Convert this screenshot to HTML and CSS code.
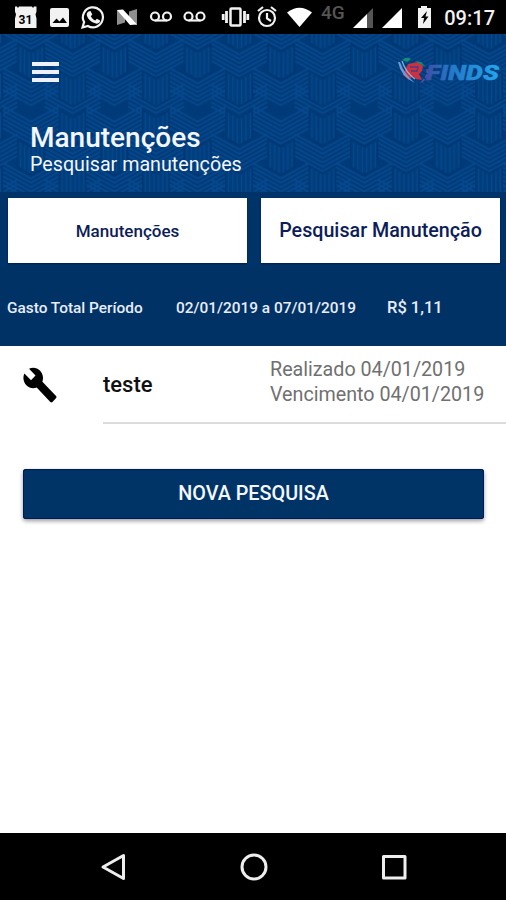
FILE: index.html
```html
<!DOCTYPE html>
<html lang="pt-BR">
<head>
  <meta charset="UTF-8" />
  <meta name="viewport" content="width=device-width, initial-scale=1.0"/>
  <title>Manutenções</title>
  <link rel="stylesheet" href="styles.css">
</head>
<body>
  <div class="status-bar">
    <svg class="status-icons" width="506" height="34" viewBox="0 0 506 34">
      <!-- agenda -->
      <path d="M15 6.500h2l1 1.500 1-1.500h13l1 1.500 1-1.500h2.500v5l-1 3 1 4v9.500H15v-9.500l1-4-1-3z" fill="#f2f2f2"/>
      <text x="25.500" y="23.500" class="cal-day">31</text>
      <!-- imagem -->
      <rect x="50" y="8" width="19" height="19" rx="2" fill="#f2f2f2"/>
      <path d="M52.500 23l4-4.500 3 3 3.500-4 4 5.500z" fill="#000"/>
      <!-- whatsapp -->
      <path d="M82.500 27.500l1.600-5.400a10 10 0 1 1 3.800 3.900z" fill="none" stroke="#f2f2f2" stroke-width="2.200"/>
      <path d="M88.500 11.500l2-.5 1.800 3.500-1.500 1.800c1 2 2.400 3.300 4.400 4.200l1.700-1.700 3.200 1.800c0 3-2.800 3.500-5 2.700-4.500-1.500-7-4-8.200-7.500-.5-1.800.3-3.500 1.600-4.300z" fill="#f2f2f2"/>
      <!-- n -->
      <path d="M117 10v15l8-2.500V13zM129 11.500l8-2.500v16l-8-2.500z" fill="#8f8f8f"/>
      <path d="M117 10l6-.5 14 15-7 .5z" fill="#fff"/>
      <!-- correio de voz -->
      <g fill="none" stroke="#f2f2f2" stroke-width="2.200">
        <circle cx="155" cy="16.500" r="4"/><circle cx="167" cy="16.500" r="4"/><path d="M155 20.500h12"/>
        <circle cx="188.500" cy="16.500" r="4"/><circle cx="200.500" cy="16.500" r="4"/><path d="M188.500 20.500h12"/>
      </g>
      <!-- vibrar -->
      <rect x="230.500" y="8.500" width="10" height="17" rx="1" fill="none" stroke="#f2f2f2" stroke-width="2.500"/>
      <path d="M226.500 11v12M244.500 11v12M223.200 14v6M247.800 14v6" stroke="#f2f2f2" stroke-width="2.800"/>
      <!-- alarme -->
      <g fill="none" stroke="#f2f2f2" stroke-width="2.200">
        <circle cx="267" cy="18" r="8"/><path d="M267 13v5.500l4 2.500M258 11l5-4M276 11l-5-4"/>
      </g>
      <!-- wifi -->
      <path d="M287 12.500q12.500-9.500 25 0L299.500 27z" fill="#fff"/>
      <text x="321" y="19" class="net">4G</text>
      <!-- sinal -->
      <path d="M353 28L367 14v14z" fill="#fff"/><path d="M367 14l6-6v20h-6z" fill="#555"/>
      <path d="M382 28L402 8v20z" fill="#fff"/>
      <!-- bateria -->
      <path d="M418 8h3V6h6v2h4v20h-13z" fill="#f2f2f2"/>
      <path d="M427 11l-6 7h3l-1 6 5.500-7.500h-3z" fill="#000"/>
    </svg>
    <span class="clock">09:17</span>
  </div>

  <header class="header">
    <svg class="header-pattern" width="506" height="158">
      <defs>
        <g id="chevron" fill="none" stroke="#06498f" stroke-width="5">
          <path d="M-84-46L0 0L84-46M-84-33L0 13L84-33M-84-20L0 26L84-20M-84-7L0 39L84-7M-84 6L0 52L84 6M-84 19L0 65L84 19"/>
        </g>
        <g id="bar">
          <path d="M-40-23L0 0L40-23V62L0 85L-40 62z" fill="#003d7c" stroke="#003673" stroke-width="4"/>
          <path d="M-32-14V62M-19-6V69M-6 2V77M7 2V77M20-6V69M33-14V62" stroke="#05478c" stroke-width="4"/>
        </g>
        <g id="weave">
          <use href="#chevron" x="93" y="30"/>
          <use href="#chevron" x="93" y="145"/>
          <use href="#chevron" x="218" y="228"/>
          <use href="#chevron" x="218" y="80"/>
          <use href="#bar" x="93" y="220"/>
          <use href="#bar" x="218" y="15"/>
          <use href="#bar" x="218" y="132"/>
        </g>
        <pattern id="mesh" width="250" height="285" patternUnits="userSpaceOnUse" patternTransform="translate(0 39.500) scale(.3333)">
          <rect width="250" height="285" fill="#003a78"/>
          <use href="#weave" x="-250" y="-285"/>
          <use href="#weave" y="-285"/>
          <use href="#weave" x="-250"/>
          <use href="#weave"/>
          <use href="#weave" y="285"/>
        </pattern>
      </defs>
      <rect width="506" height="158" fill="url(#mesh)"/>
    </svg>
    <div class="header-content">
      <div class="toolbar">
        <button class="menu" aria-label="Menu"><span></span><span></span><span></span></button>
        <svg class="logo" width="106" height="32" viewBox="0 0 106 32">
          <defs>
            <linearGradient id="logo-blue" x1="0" x2="1">
              <stop offset="0" stop-color="#3d4fa5"/>
              <stop offset=".35" stop-color="#2479c8"/>
              <stop offset="1" stop-color="#25a5ec"/>
            </linearGradient>
          </defs>
          <path d="M12 8l10-2 5 4-1 5-3 3 3 6-6-1-3-3-4 4-6-5z" fill="#cf3040"/>
          <path d="M14 11h8l-1 4h-6" fill="none" stroke="#4a3f80" stroke-width="1.500"/>
          <path d="M2 6q3 15 17 21Q8 18 4 6z" fill="#6f9bd6"/>
          <path d="M6 5q4 12 13 18" fill="none" stroke="#8cb3df" stroke-width="1.200"/>
          <path d="M6 4q5-4 9-1l-4 3zM19 5l6 1 5 5-6-3z" fill="#148f74"/>
          <path d="M31 13q2 8-7 14" fill="none" stroke="#5b4aa3" stroke-width="1.800" stroke-dasharray="4 1.500"/>
          <text x="30" y="23.500" class="logo-text" textLength="73" lengthAdjust="spacingAndGlyphs" fill="url(#logo-blue)" stroke="url(#logo-blue)">FINDS</text>
        </svg>
      </div>
      <h1>Manutenções</h1>
      <p class="subtitle">Pesquisar manutenções</p>
    </div>
  </header>

  <nav class="tabs">
    <button class="tab">Manutenções</button>
    <button class="tab tab-large">Pesquisar Manutenção</button>
  </nav>

  <div class="summary">
    <span class="summary-label">Gasto Total Período</span>
    <span class="summary-period">02/01/2019 a 07/01/2019</span>
    <span class="summary-value">R$ 1,11</span>
  </div>

  <main class="content">
    <div class="item">
      <svg class="wrench" width="36" height="38" viewBox="0 0 24 24" preserveAspectRatio="none">
        <path d="M22.700 19l-9.100-9.100c.9-2.300.4-5-1.500-6.900-2-2-5-2.400-7.400-1.300L9 6 6 9 1.600 4.700C.4 7.100.9 10.100 2.900 12.100c1.900 1.900 4.600 2.400 6.900 1.500l9.100 9.100c.4.4 1 .4 1.400 0l2.300-2.300c.5-.4.5-1.100.1-1.400z"/>
      </svg>
      <div class="item-body">
        <span class="item-name">teste</span>
        <div class="item-dates">
          <div class="done">Realizado 04/01/2019</div>
          <div class="due">Vencimento 04/01/2019</div>
        </div>
      </div>
    </div>
    <button class="new-search">NOVA PESQUISA</button>
  </main>

  <div class="nav-bar">
    <svg width="28" height="30" viewBox="0 0 28 30"><path d="M3 15L23.500 3.500v23z"/></svg>
    <svg width="28" height="30" viewBox="0 0 28 30"><circle cx="14" cy="15" r="12"/></svg>
    <svg width="28" height="30" viewBox="0 0 28 30"><rect x="3.500" y="4.500" width="21.500" height="21.500"/></svg>
  </div>
</body>
</html>
```

FILE: styles.css
```css
* {
  box-sizing: border-box;
}
body {
  margin: 0;
  width: 506px;
  height: 900px;
  display: flex;
  flex-direction: column;
  overflow: hidden;
  background: #fff;
  font-family: Roboto, sans-serif;
  font-weight: 500;
}
button {
  border: none;
  padding: 0;
  font-family: inherit;
  font-weight: 500;
  white-space: nowrap;
}
.status-bar {
  height: 34px;
  display: grid;
  background: #000;
}
.status-icons,
.clock {
  grid-area: 1 / 1;
}
.clock {
  justify-self: end;
  padding: 5px 11px 0 0;
  color: #f2f2f2;
  font-size: 20px;
  line-height: 26px;
}
.cal-day {
  font-size: 12px;
  font-weight: 700;
  text-anchor: middle;
}
.net {
  fill: #555;
  font-size: 19px;
}
.header {
  height: 158px;
  display: grid;
}
.header-pattern,
.header-content {
  grid-area: 1 / 1;
}
.header-content {
  z-index: 1;
  color: #f3f6ff;
}
.toolbar {
  height: 75px;
  padding-left: 32px;
  display: flex;
  align-items: center;
  justify-content: space-between;
}
.menu {
  width: 27px;
  display: flex;
  flex-direction: column;
  gap: 4px;
  background: none;
}
.menu span {
  height: 4px;
  background: #eef1fa;
}
.logo {
  margin-right: 4px;
}
.logo-text {
  font-size: 21px;
  font-weight: 900;
  font-style: italic;
  stroke-width: 0.4px;
}
h1 {
  margin: 13px 0 0 30px;
  font-size: 28px;
  font-weight: 500;
  line-height: 32px;
}
.subtitle {
  margin: -1px 0 0 30px;
  font-size: 19.7px;
  font-weight: 400;
  line-height: 24px;
}
.tabs {
  height: 75px;
  padding: 6px 6px 0 8px;
  display: flex;
  gap: 14px;
  background: #003468;
}
.tab {
  flex: 1;
  height: 65px;
  background: #fff;
  color: #0c1d59;
  font-size: 17px;
  box-shadow: 0 1px 2px #001c50;
}
.tab-large {
  font-size: 19.7px;
}
.summary {
  height: 79px;
  padding: 2px 0 0 7px;
  display: flex;
  align-items: center;
  background: #003265;
  color: #e9edfa;
  font-size: 15.4px;
  white-space: nowrap;
}
.summary-label {
  width: 169px;
}
.summary-period {
  width: 211px;
}
.summary-value {
  font-size: 16.5px;
}
.content {
  flex: 1;
}
.item {
  height: 78px;
  padding-left: 22px;
  display: flex;
  align-items: center;
}
.item-body {
  flex: 1;
  height: 78px;
  margin-left: 45px;
  display: flex;
  align-items: center;
  border-bottom: 2px solid #dcdcdc;
}
.item-name {
  width: 167px;
  color: #111;
  font-size: 22px;
}
.item-dates {
  padding-bottom: 4px;
  color: #707070;
  font-size: 19.7px;
  font-weight: 400;
  line-height: 25px;
  white-space: nowrap;
}
.new-search {
  display: block;
  width: 461px;
  height: 50px;
  margin: 45px 0 0 23px;
  padding-bottom: 1px;
  border-radius: 3px;
  background: #003366;
  color: #f4f7ff;
  font-size: 19.8px;
  box-shadow: inset 0 0 0 1px #00195a, 0 2px 4px rgba(0, 0, 0, 0.4);
}
.nav-bar {
  height: 67px;
  padding: 0 98px 0 100px;
  display: flex;
  align-items: center;
  justify-content: space-between;
  background: #000;
}
.nav-bar svg {
  fill: none;
  stroke: #eee;
  stroke-width: 3;
  stroke-linejoin: round;
}
```
